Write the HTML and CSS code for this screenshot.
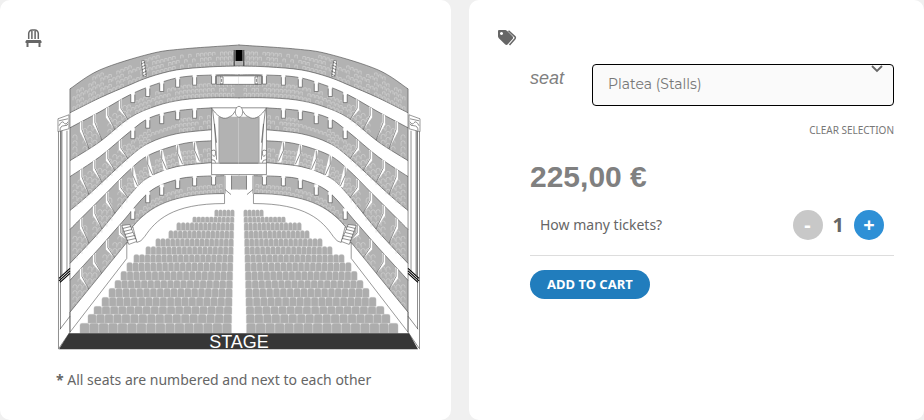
FILE: index.html
```html
<!DOCTYPE html>
<html lang="en">
<head>
    <meta charset="UTF-8">
    <meta name="viewport" content="width=device-width, initial-scale=1.0">
    <title>Choose your seats</title>
    <link rel="stylesheet" href="styles.css">
</head>
<body>
    <main class="booking">
        <section class="card">
            <svg class="card-icon" viewBox="0 0 18 20" aria-hidden="true">
                <path d="M4.700 11V5.500a3.500 3.500 0 0 1 3.500-3.500h2.600a3.500 3.500 0 0 1 3.500 3.500V11M7.900 3v8M11.100 3v8" fill="none" stroke="#666" stroke-width="1.500"/>
                <path d="M2.500 12h14l1 1.200V15h-1v4h-2v-4h-10v4h-2v-4h-1v-1.800z" fill="#666"/>
            </svg>
            <figure class="theatre">
                <svg class="plan" viewBox="56 40 366 312" role="img" aria-label="Seating plan">
                    <g id="half">
                        <g id="tiers"></g>
                        <!-- stairs of the gallery -->
                        <path class="wall" d="M141.500 61l3-.5 2 16-3 .5z"/>
                        <path class="ink" d="M141.500 64l4-2M142 67l4-2M142 70l4-2M143 73l4-2M143 76l4-2"/>
                        <!-- parapet of the lowest boxes -->
                        <path class="wall" d="M70 313L127 243v16L70 333z"/>
                        <path class="wall" d="M133 227C150 207 172 194 225 194v10C172 204 156 221 145 237q-4 6-8 6l-4-16z"/>
                        <path class="wall" d="M122 226l8-1 7 17-8 3z"/>
                        <path class="ink" d="M123 229l8-2M124 232l8-2M125 235l8-2M126 238l9-2M127 241l9-2"/>
                        <!-- side column -->
                        <path class="ink" d="M58.500 119v231M67 131v142M70 89v244"/>
                        <path d="M61.500 130v146" stroke="#999" stroke-width="2"/>
                        <path class="ink" d="M60.500 130v200"/>
                        <path class="wall" d="M58 119l11-4v14l-11 3z"/>
                        <path class="ink" d="M59 121l9-2M59 126q3-6 5-3t4-1M60 131q0-5 4-5t4-2"/>
                        <path d="M59 279l11-10M59 281.500l11-10M60 283l10-9" stroke="#000" stroke-width="1.200"/>
                        <path class="ink" d="M60 330l10-13M59 349l11-16"/>
                        <g id="stalls"></g>
                        <!-- royal box -->
                        <path d="M212 108h28v67h-28z" fill="#fff"/>
                        <path d="M220 117h20v47h-20z" fill="#b2b2b2"/>
                        <path d="M212 108c5 8 11 12 16 10q5-1 8-7h4v-3z" fill="#fff"/>
                        <path class="ink" d="M212 108c5 8 11 12 16 10q5-1 8-7"/>
                        <path class="ink" d="M240 108h-28v67h28M213 110l4 33M215 124l2 36M212 151q5-2 4 3t-3 1M212 160q4 0 4 3M212 163.500h28M219.500 117v46"/>
                        <path d="M217 76h23v8.500h-23z" fill="#fff"/>
                        <path class="ink" d="M240 84.500h-23V76h23M218.500 76v8M220.500 76v8h3v-7h-3M222 79v3"/>
                        <path d="M225 175.500h7v19h-7z" fill="#fff"/>
                        <path d="M232 176h8v14h-8z" fill="#b2b2b2"/>
                        <path class="ink" d="M225.500 176v18M232 176v14M225.500 190l6 5"/>
                        <path d="M234.700 50v16" stroke="#333"/>
                    </g>
                    <use href="#half" transform="translate(479 0) scale(-1 1)"/>
                    <path d="M236 50h7v11h-7z"/>
                    <ellipse class="wall" cx="239.500" cy="112" rx="3.700" ry="5.500"/>
                    <path d="M69 334h341l9 16H59z" fill="#373737"/>
                    <text class="stage-label" x="239.500" y="349" text-anchor="middle">STAGE</text>
                </svg>
                <figcaption><b>*</b> All seats are numbered and next to each other</figcaption>
            </figure>
        </section>

        <section class="card">
            <svg class="card-icon tags" viewBox="0 0 20 18" aria-hidden="true">
                <path fill-rule="evenodd" d="M2 1h6.500l1.500.7 5.500 5.600q1.300 1.400 0 2.800l-4.700 5.200q-1.400 1.300-2.800 0L1.600 9 1 7.500V2q0-1 1-1zM4.500 3a1.500 1.500 0 1 0 .01 0z" fill="#666"/>
                <path d="M11.500 1.700l6.300 5.900q1.100 1.200 0 2.500l-5.300 6" fill="none" stroke="#666" stroke-width="1.500"/>
            </svg>
            <form class="order">
                <div class="seat-row">
                    <label for="seat">seat</label>
                    <div class="select-wrap">
                        <select id="seat">
                            <option>Platea (Stalls)</option>
                        </select>
                        <svg class="chevron" viewBox="0 0 12 8" aria-hidden="true"><path d="M1 1l5 5 5-5" fill="none" stroke="#666" stroke-width="1.800"/></svg>
                    </div>
                </div>
                <a class="clear" href="#">CLEAR SELECTION</a>
                <p class="price">225,00 €</p>
                <div class="quantity">
                    <span>How many tickets?</span>
                    <div class="stepper">
                        <button class="round minus" type="button" aria-label="Less">-</button>
                        <output>1</output>
                        <button class="round plus" type="button" aria-label="More">+</button>
                    </div>
                </div>
                <button class="add" type="submit">ADD TO CART</button>
            </form>
        </section>
    </main>
    <script src="script.js"></script>
</body>
</html>
```
FILE: styles.css
```css
* {
    box-sizing: border-box;
}

body {
    margin: 0;
    background: #f0f0f0;
    color: #666;
    font-family: "Noto Sans", "Open Sans", sans-serif;
    font-size: 14px;
    line-height: 20px;
}

.booking {
    display: grid;
    grid-template-columns: 451fr 455fr;
    gap: 18px;
    min-height: 100vh;
}

.card {
    background: #fff;
    border-radius: 10px;
    padding: 28px 30px 20px 24px;
}

.card-icon {
    display: block;
    width: 18px;
    height: 20px;
}

.tags {
    width: 20px;
    margin-left: 4px;
}

/* seating plan */

.theatre {
    margin: -8px 0 0 32px;
}

.plan {
    display: block;
    width: 100%;
}

.wall {
    fill: #fff;
    stroke: #555;
    stroke-width: .6;
}

.ink {
    fill: none;
    stroke: #444;
    stroke-width: .6;
}

.stage-label {
    fill: #fff;
    font-family: "Liberation Sans", Arial, sans-serif;
    font-size: 18px;
}

figcaption {
    margin-top: 19px;
}

/* order form */

.order {
    display: flex;
    flex-direction: column;
    margin: 16px 0 0 37px;
}

.seat-row {
    display: flex;
}

.seat-row label {
    width: 62px;
    padding-top: 4px;
    color: #808080;
    font-family: "Liberation Sans", Arial, sans-serif;
    font-size: 18px;
    font-style: italic;
}

.select-wrap {
    position: relative;
    flex: 1;
}

select {
    display: block;
    width: 100%;
    height: 42px;
    padding: 0 15px 2px;
    appearance: none;
    background: #fafafa;
    border: 1px solid #000;
    border-radius: 4px;
    color: #777;
    font-family: Montserrat, Inter, sans-serif;
    font-size: 14px;
}

.chevron {
    position: absolute;
    top: 1px;
    right: 11px;
    width: 12px;
    height: 8px;
}

.clear {
    align-self: flex-end;
    margin-top: 14px;
    color: #777;
    font-size: 10px;
    text-decoration: none;
}

.price {
    margin: 20px 0 16px;
    color: #808080;
    font-family: "Liberation Sans", Arial, sans-serif;
    font-size: 30px;
    font-weight: bold;
    line-height: 34px;
}

.quantity {
    display: flex;
    justify-content: space-between;
    align-items: center;
    padding: 0 10px 15px;
    border-bottom: 1px solid #ddd;
}

.stepper {
    display: flex;
    align-items: center;
    gap: 10px;
}

.stepper output {
    font-size: 20px;
    font-weight: bold;
}

.round {
    width: 30px;
    height: 30px;
    padding: 0;
    border: 0;
    border-radius: 50%;
    color: #fff;
    font-family: inherit;
    font-size: 20px;
    font-weight: bold;
    line-height: 30px;
}

.minus {
    background: #c8c8c8;
}

.plus {
    background: #2e90d6;
}

.add {
    align-self: flex-start;
    margin-top: 14px;
    padding: 4px 17px 5px;
    background: #217dbd;
    border: 0;
    border-radius: 15px;
    color: #fff;
    font-family: inherit;
    font-size: 13px;
    font-weight: bold;
    line-height: 20px;
}
```
FILE: script.js
```javascript
// Left half of the house, the right half is a mirrored <use>.
const NS = "http://www.w3.org/2000/svg";

// each tier: upper and lower edge as [x, y] points
const tiers = [
    { top: [[70, 89], [100, 70], [150, 54], [183, 49], [240, 45]],
      bottom: [[70, 113], [100, 98], [130, 85], [150, 77], [177, 70], [210, 67], [240, 66]] },
    { top: [[70, 128], [100, 112], [130, 95], [157, 84], [183, 77], [217, 75], [240, 75]],
      bottom: [[70, 161], [100, 142], [130, 118], [157, 106], [183, 100], [212, 98], [240, 98]], boxes: true },
    { top: [[70, 177], [100, 157], [130, 132], [150, 118], [177, 111], [212, 108]],
      bottom: [[70, 211], [90, 194], [130, 157], [150, 143], [177, 134], [212, 130]], boxes: true },
    { top: [[70, 230], [105, 195], [130, 170], [150, 155], [183, 144], [212, 141]],
      bottom: [[70, 264], [100, 232], [133, 192], [150, 177], [177, 167], [212, 163]], boxes: true, slanted: true },
    { top: [[70, 281], [100, 248], [122, 223], [150, 192], [177, 180], [197, 177], [225, 176]],
      bottom: [[70, 313], [100, 277], [127, 244], [133, 227], [150, 211], [167, 203], [190, 197], [225, 194]], boxes: true }
];

// stalls: top of each row, its left end and the number of seats
const stalls = [
    [210, 215, 5], [217, 193, 10], [223, 177, 13], [231, 169, 14], [239, 156, 16],
    [247, 146, 17], [255, 134, 18], [263, 127, 18], [272, 121, 18], [281, 115, 18],
    [289, 109, 18], [298, 102, 18], [307, 94, 17], [315, 88, 17], [324, 80, 16]
];

function add(parent, d, attrs) {
    const path = document.createElementNS(NS, "path");
    path.setAttribute("d", d);
    for (const name in attrs) path.setAttribute(name, attrs[name]);
    parent.appendChild(path);
}

// smooth curve through the points
function curve(points) {
    let d = "";
    for (let i = 0; i < points.length - 1; i++) {
        const p0 = points[i - 1] || points[i];
        const p1 = points[i];
        const p2 = points[i + 1];
        const p3 = points[i + 2] || p2;
        d += `C${p1[0] + (p2[0] - p0[0]) / 6} ${p1[1] + (p2[1] - p0[1]) / 6} `
           + `${p2[0] - (p3[0] - p1[0]) / 6} ${p2[1] - (p3[1] - p1[1]) / 6} ${p2[0]} ${p2[1]}`;
    }
    return d;
}

function yAt(points, x) {
    for (let i = 1; i < points.length; i++) {
        const [x1, y1] = points[i - 1];
        const [x2, y2] = points[i];
        if (x <= x2) return y1 + (y2 - y1) * (x - x1) / (x2 - x1);
    }
    return points[points.length - 1][1];
}

function drawTier(tier) {
    const group = document.getElementById("tiers");
    const down = tier.bottom.slice().reverse();
    const upper = `M${tier.top[0]}${curve(tier.top)}`;
    add(group, `${upper}L${down[0]}${curve(down)}Z`, { fill: "#b2b2b2" });
    add(group, `${upper}M${down[0]}${curve(down)}`, { class: "ink" });

    // seats
    let seats = "";
    const last = tier.top[tier.top.length - 1][0];
    const end = last < 220 ? 209 : last - 4;
    for (let x = 73; x < end; x += x < 125 && tier.boxes ? 5 : 4) {
        const top = yAt(tier.top, x);
        const bottom = yAt(tier.bottom, x);
        const step = tier.boxes && x < 125 ? 6 : 5;
        for (let y = bottom - step; y > top + (tier.boxes ? 6 : 2); y -= step) {
            if (Math.round(x * 7 + y * 3) % 6 === 0) continue;
            seats += tier.boxes && x < 125
                ? `M${x} ${y + 3}v-1q0-2 2-2t2 2v3`
                : `M${x} ${y + 4}v-3.5h2.500v2.500`;
        }
    }
    add(group, seats, { fill: "none", stroke: "#d6d6d6", "stroke-width": 0.6 });

    if (!tier.boxes) return;
    // walls between the side boxes
    for (const x of [80, 93, 106, 119]) {
        const top = yAt(tier.top, x);
        const foot = yAt(tier.bottom, x + 9);
        add(group, `M${x} ${top}v9L${x + 9} ${foot}L${x + 3} ${top + 7}V${top - 2}z`, { fill: "#fff" });
        add(group, `M${x + 2} ${top - 1}v8L${x + 9} ${foot}`, { class: "ink" });
    }
    // pillars
    for (const x of [133, 148, 162, 178, 195, 214]) {
        if (x > end) continue;
        const top = yAt(tier.top, x) - 1;
        if (tier.slanted) {
            add(group, `M${x - 2} ${top}h3l5 21h-4z`, { fill: "#fff" });
            add(group, `M${x} ${top + 1}v8l5 11`, { class: "ink" });
        } else {
            add(group, `M${x - 2} ${top - 1}h4v11h-4z`, { fill: "#fff" });
            add(group, `M${x - 2} ${top + 2}v8h4v-8`, { class: "ink" });
        }
    }
}

function drawStalls() {
    const group = document.getElementById("stalls");
    stalls.forEach(([y, left, count], row) => {
        const right = 235 - row / 5;
        const width = (right - left) / count;
        const height = row < 14 ? stalls[row + 1][0] - y : 10;
        let d = "";
        for (let i = 0; i < count; i++) {
            d += `M${left + i * width} ${y + height}v${2 - height}q0-2 2-2h${width - 4.2}q2 0 2 2v${height - 2}z`;
        }
        add(group, d, { fill: "#adadad", stroke: "#c8c8c8", "stroke-width": 0.3 });
    });
}

tiers.forEach(drawTier);
drawStalls();
```
